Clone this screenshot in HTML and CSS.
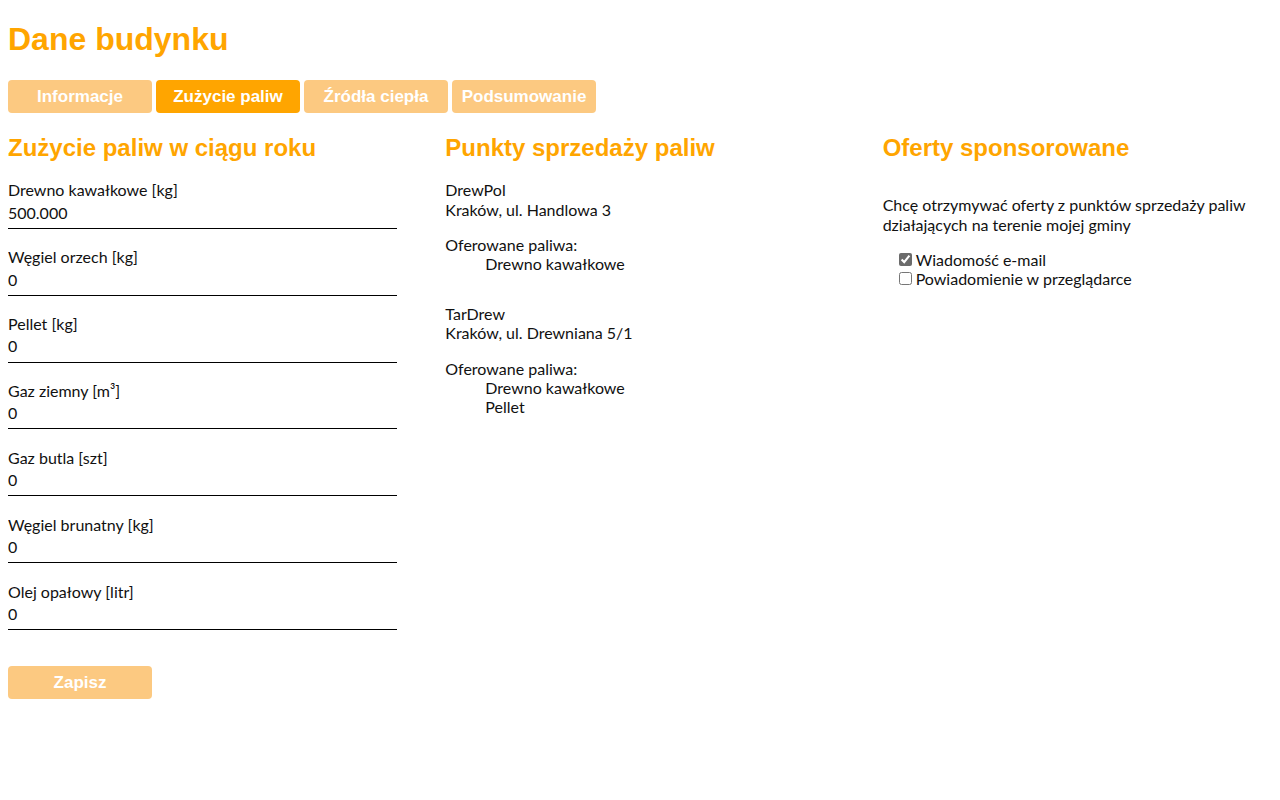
FILE: index.html
```html
<!DOCTYPE html>
<html lang="pl">
<head>
<meta charset="utf-8">
<title>Dane budynku</title>
<link rel="stylesheet" href="styles.css">
</head>
<body>
<h1 class="page-title">Dane budynku</h1>
<nav class="tabs">
  <button class="tab">Informacje</button>
  <button class="tab tab-active">Zużycie paliw</button>
  <button class="tab">Źródła ciepła</button>
  <button class="tab">Podsumowanie</button>
</nav>
<main class="columns">
  <section class="col">
    <h2 class="section-title">Zużycie paliw w ciągu roku</h2>
    <form class="fuel-form">
      <label class="field"><span class="field-label">Drewno kawałkowe [kg]</span><input class="field-input" type="text" value="500.000"></label>
      <label class="field"><span class="field-label">Węgiel orzech [kg]</span><input class="field-input" type="text" value="0"></label>
      <label class="field"><span class="field-label">Pellet [kg]</span><input class="field-input" type="text" value="0"></label>
      <label class="field"><span class="field-label">Gaz ziemny [m³]</span><input class="field-input" type="text" value="0"></label>
      <label class="field"><span class="field-label">Gaz butla [szt]</span><input class="field-input" type="text" value="0"></label>
      <label class="field"><span class="field-label">Węgiel brunatny [kg]</span><input class="field-input" type="text" value="0"></label>
      <label class="field"><span class="field-label">Olej opałowy [litr]</span><input class="field-input" type="text" value="0"></label>
      <button class="save-btn" type="button">Zapisz</button>
    </form>
  </section>
  <section class="col">
    <h2 class="section-title">Punkty sprzedaży paliw</h2>
    <div class="shop">
      <div class="shop-name">DrewPol</div>
      <div class="shop-addr">Kraków, ul. Handlowa 3</div>
      <div class="shop-offer">Oferowane paliwa:</div>
      <ul class="fuel-list">
        <li>Drewno kawałkowe</li>
      </ul>
    </div>
    <div class="shop">
      <div class="shop-name">TarDrew</div>
      <div class="shop-addr">Kraków, ul. Drewniana 5/1</div>
      <div class="shop-offer">Oferowane paliwa:</div>
      <ul class="fuel-list">
        <li>Drewno kawałkowe</li>
        <li>Pellet</li>
      </ul>
    </div>
  </section>
  <section class="col">
    <h2 class="section-title">Oferty sponsorowane</h2>
    <p class="sponsor-text">Chcę otrzymywać oferty z punktów sprzedaży paliw działających na terenie mojej gminy</p>
    <div class="checks">
      <label class="check"><input type="checkbox" checked>Wiadomość e-mail</label>
      <label class="check"><input type="checkbox">Powiadomienie w przeglądarce</label>
    </div>
  </section>
</main>
</body>
</html>
```

FILE: styles.css
```css
body {
  margin: 8px;
  font-family: "Lato", "Liberation Sans", sans-serif;
  font-size: 16px;
  color: #111;
  background: #fff;
}

.page-title {
  font-family: "Liberation Sans", Arial, sans-serif;
  font-size: 32px;
  font-weight: bold;
  color: #ffa500;
  margin: 13.44px 0 21.44px;
}

.tabs {
  display: flex;
  gap: 4px;
}

.tab,
.save-btn {
  width: 144px;
  height: 33px;
  padding: 2px 0 0;
  border: 0;
  border-radius: 4px;
  background: #fcc981;
  color: #fff;
  font-family: "Liberation Sans", Arial, sans-serif;
  font-size: 17px;
  font-weight: bold;
  cursor: pointer;
}

.tab-active {
  background: #ffa500;
}

.columns {
  display: grid;
  grid-template-columns: repeat(3, 1fr);
  column-gap: 48px;
}

.section-title {
  font-family: "Liberation Sans", Arial, sans-serif;
  font-size: 24px;
  font-weight: bold;
  color: #ffa500;
  margin: 21px 0 18.5px;
  line-height: 28px;
}

.fuel-form {
  display: flex;
  flex-direction: column;
}

.field {
  display: block;
  margin-bottom: 18.5px;
}

.field-label {
  display: block;
  line-height: 19.2px;
}

.field-input {
  display: block;
  width: 100%;
  box-sizing: border-box;
  border: 0;
  border-bottom: 1px solid #000;
  padding: 3px 0 6px;
  margin: 0;
  font-family: "Lato", sans-serif;
  font-size: 16px;
  line-height: 19.2px;
  height: 29.2px;
  color: #111;
  background: transparent;
  outline: none;
}

.save-btn {
  margin-top: 17px;
}

.shop {
  margin-bottom: 31px;
  line-height: 19.2px;
}

.shop-offer {
  margin-top: 16px;
}

.fuel-list {
  list-style: none;
  margin: 0;
  padding-left: 40px;
}

.sponsor-text {
  margin: 33.5px 0 16px;
  line-height: 19.2px;
}

.checks {
  padding-left: 12px;
}

.check {
  display: flex;
  align-items: center;
  height: 19.2px;
}

.check input {
  width: 13px;
  height: 13px;
  margin: 3px 4px 3px 4px;
  accent-color: #6b6b6b;
}
```
